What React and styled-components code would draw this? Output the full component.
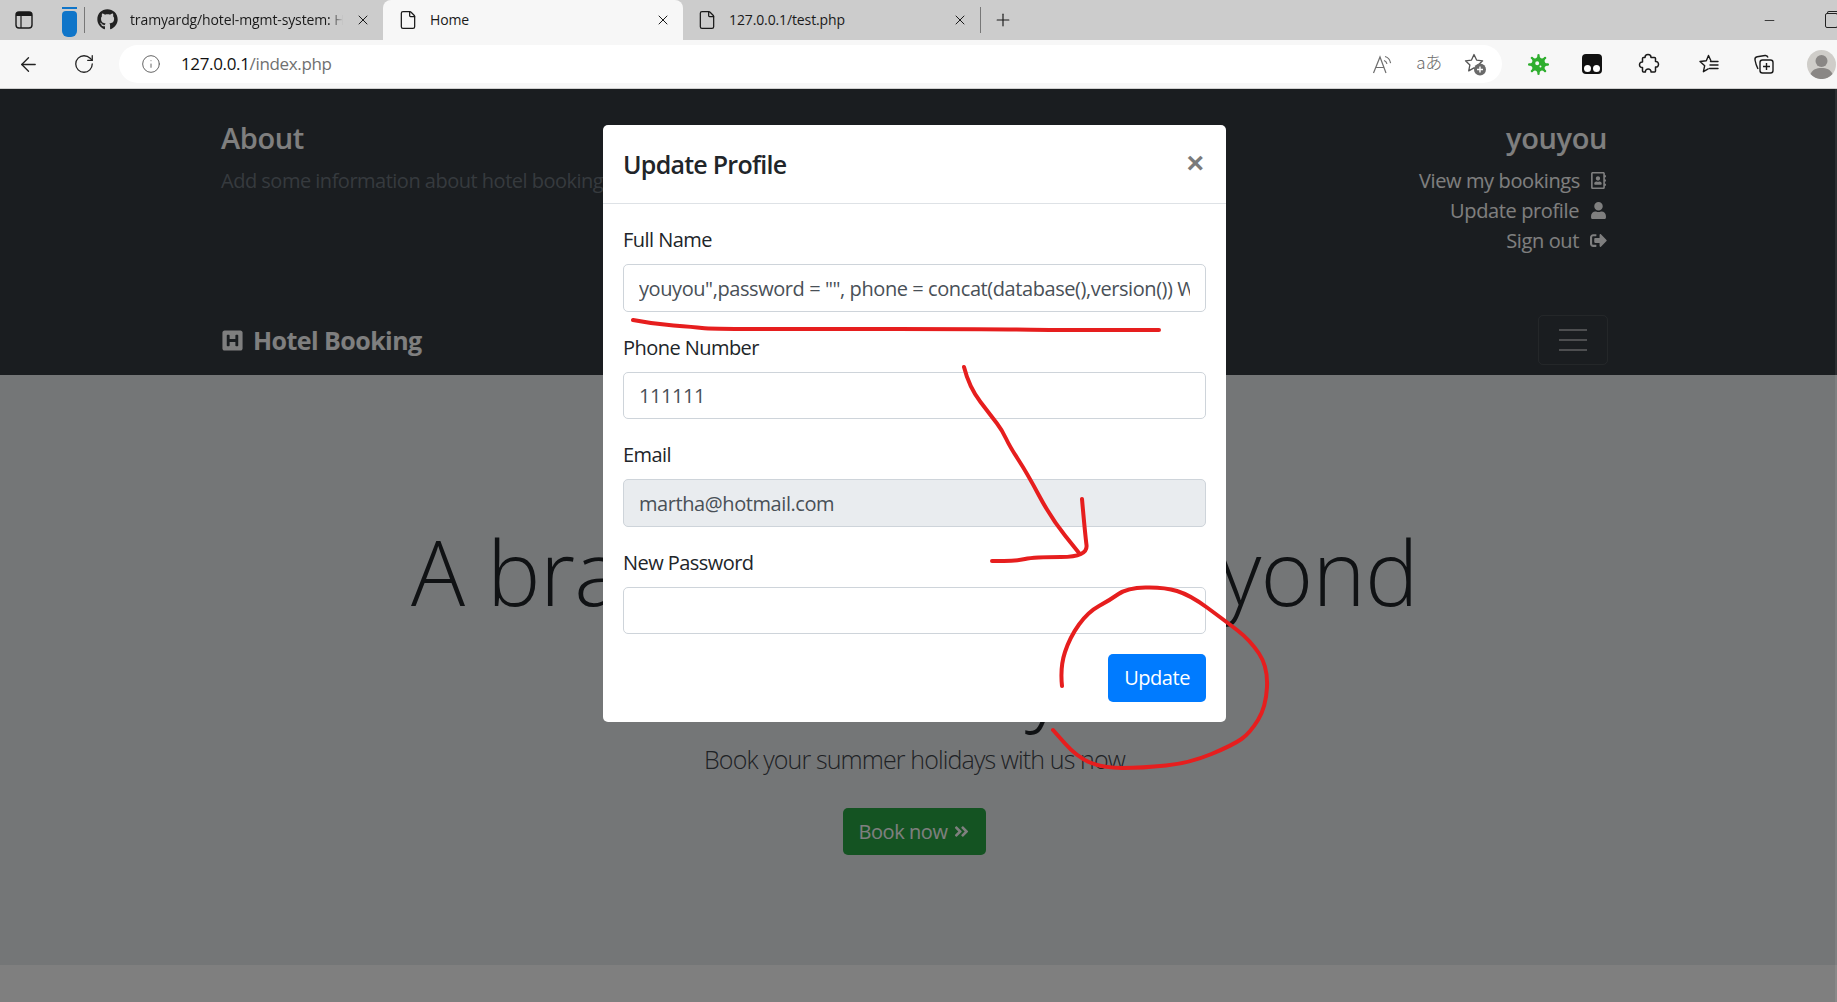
import React from "react"
import styled, { createGlobalStyle } from "styled-components"
import { FaGithub, FaHSquare, FaRegAddressBook, FaUser, FaSignOutAlt, FaAngleDoubleRight, FaVirus } from "react-icons/fa"
import { ArrowLeft, RotateCw, Info, X, Plus, Minus, File } from "lucide-react"

const GlobalStyle = createGlobalStyle`
  html, body { margin: 0; padding: 0; height: 100%; overflow: hidden; }
  body { font-family: "Open Sans", "Liberation Sans", sans-serif; background: #fff; }
  #root { height: 100%; }
`

const Shell = styled.div`
  position: relative;
  width: 1837px;
  height: 1002px;
  overflow: hidden;
`

/* browser chrome */
const TabStrip = styled.div`
  display: flex;
  align-items: center;
  height: 40px;
  background: #cccccc;
  color: #1a1a1a;
`
const SidebarSlot = styled.div`
  display: flex;
  justify-content: center;
  width: 48px;
`
const VerticalPill = styled.div`
  position: relative;
  width: 15px;
  height: 26px;
  margin: 7px 0 0 14px;
  background: #0f75c9;
  border-radius: 4px 4px 6px 6px;
  &::before {
    content: "";
    position: absolute;
    top: -4px;
    left: 0;
    right: 0;
    height: 2px;
    background: #0f75c9;
  }
`
const Divider = styled.div`
  width: 1px;
  height: 26px;
  background: #777;
  margin-left: ${p => p.$ml || 0}px;
`
const Tab = styled.div`
  display: flex;
  align-items: center;
  width: ${p => p.$w}px;
  height: 40px;
  padding: 0 0 1px ${p => p.$pl}px;
  box-sizing: border-box;
  margin-left: ${p => p.$ml || 0}px;
  background: ${p => (p.$active ? "#f7f7f7" : "transparent")};
  border-radius: 8px 8px 0 0;
  font-size: 14px;
  letter-spacing: -0.12px;
  white-space: nowrap;
`
const TabIcon = styled.span`
  display: flex;
  justify-content: center;
  width: 21px;
  flex: none;
`
const TabTitle = styled.span`
  flex: 1;
  min-width: 0;
  margin-left: 12px;
  overflow: hidden;
  mask-image: ${p => (p.$fade ? "linear-gradient(to right, #000 94%, transparent)" : "none")};
`
const TabClose = styled.span`
  display: flex;
  justify-content: center;
  width: 40px;
  flex: none;
`
const WindowButtons = styled.div`
  display: flex;
  align-items: center;
  gap: 48px;
  margin-left: auto;
  margin-right: -1px;
`
const RestoreIcon = styled.span`
  position: relative;
  display: block;
  width: 11px;
  height: 13px;
  border: 1px solid #222;
  border-radius: 2px;
  box-shadow: 2px -2px 0 -1px #cccccc, 2px -2px 0 0 #222;
`
const Toolbar = styled.div`
  display: flex;
  align-items: center;
  height: 48px;
  background: #f7f7f7;
  border-bottom: 1px solid #cfcfcf;
`
const NavSlot = styled.div`
  display: flex;
  justify-content: center;
  width: 56px;
  flex: none;
`
const AddressBar = styled.div`
  display: flex;
  align-items: center;
  width: 1383px;
  height: 38px;
  margin-left: 7px;
  padding-left: 22px;
  box-sizing: border-box;
  background: #fff;
  border-radius: 19px;
  flex: none;
`
const Url = styled.div`
  margin-left: 20px;
  padding-bottom: 2px;
  font-size: 17px;
  letter-spacing: -0.35px;
  color: #111;
  span { color: #707070; }
`
const BarActions = styled.div`
  display: flex;
  align-items: center;
  margin-left: auto;
  padding-right: 4px;
`
const BarAction = styled.div`
  display: flex;
  justify-content: center;
  width: 46px;
  color: #6e6e6e;
`
const ExtSlot = styled.div`
  display: flex;
  justify-content: center;
  flex: none;
  width: 36px;
  margin-left: ${p => p.$ml}px;
  color: #222;
`
const ExtDivider = styled.div`
  width: 2px;
  height: 21px;
  margin-left: 11px;
  background: #cfcfcf;
`

/* page behind the modal */
const Page = styled.div`
  position: relative;
  height: 913px;
  background: #fff;
  overflow: hidden;
`
const DarkHeader = styled.header`
  background: #343a40;
  height: 286px;
  color: #fff;
`
const Collapse = styled.div`
  display: flex;
  justify-content: space-between;
  height: 156px;
  padding: 31px 230px 29px 221px;
`
const AboutCol = styled.div`
  width: 700px;
`
const SectionTitle = styled.h4`
  margin: 0 0 10px;
  font-size: 29px;
  font-weight: 600;
  line-height: 36px;
  letter-spacing: -0.4px;
`
const Muted = styled.p`
  margin: 0;
  font-size: 20px;
  line-height: 30px;
  color: #6c757d;
  letter-spacing: -0.5px;
  white-space: nowrap;
`
const AccountCol = styled.div`
  text-align: right;
`
const AccountList = styled.ul`
  margin: -1px 0 0;
  padding: 0;
  list-style: none;
`
const AccountItem = styled.li`
  display: flex;
  align-items: center;
  justify-content: flex-end;
  gap: ${p => p.$gap}px;
  height: 30px;
  font-size: 20px;
  letter-spacing: -0.38px;
`
const NavRow = styled.nav`
  display: flex;
  align-items: center;
  justify-content: space-between;
  height: 70px;
  padding: 0 229px 0 221px;
`
const Brand = styled.div`
  display: flex;
  align-items: center;
  gap: 9px;
  font-size: 25px;
  font-weight: 700;
  letter-spacing: -0.55px;
`
const Hamburger = styled.div`
  display: flex;
  flex-direction: column;
  justify-content: center;
  gap: 8px;
  box-sizing: border-box;
  width: 70px;
  height: 50px;
  padding: 0 20px;
  border: 1px solid rgba(255, 255, 255, 0.1);
  border-radius: 5px;
  span {
    height: 2px;
    background: rgba(255, 255, 255, 0.5);
  }
`
const Hero = styled.section`
  height: 590px;
  padding-top: 142px;
  padding-right: 8px;
  box-sizing: border-box;
  background: #e9ecef;
  text-align: center;
  color: #212529;
`
const HeroTitle = styled.h1`
  margin: 0 0 8px;
  font-size: 90px;
  font-weight: 300;
  line-height: 108px;
  letter-spacing: -0.7px;
`
const HeroSecondLine = styled.span`
  letter-spacing: 3px;
`
const Lead = styled.p`
  margin: 0 0 30px;
  font-size: 25px;
  font-weight: 300;
  line-height: 37px;
  letter-spacing: -0.88px;
  color: #3f454a;
`
const BookButton = styled.div`
  display: inline-flex;
  align-items: center;
  gap: 6px;
  height: 47px;
  padding: 0 16px;
  background: #28a745;
  border-radius: 5px;
  color: #fff;
  font-size: 20px;
  letter-spacing: -0.45px;
`
const Backdrop = styled.div`
  position: absolute;
  inset: 0;
  display: flex;
  justify-content: center;
  padding-right: 8px;
  background: rgba(0, 0, 0, 0.5);
`
const ScrollEdge = styled.div`
  position: absolute;
  top: 0;
  right: 0;
  bottom: 0;
  width: 2px;
  background: rgba(255, 255, 255, 0.08);
`
const Modal = styled.div`
  width: 623px;
  height: 597px;
  margin-top: 36px;
  background: #fff;
  border-radius: 5px;
  color: #212529;
`
const ModalHeader = styled.div`
  display: flex;
  justify-content: space-between;
  box-sizing: border-box;
  height: 79px;
  padding: 21px 22px 19px 20px;
  border-bottom: 1px solid #dee2e6;
`
const ModalTitle = styled.div`
  font-size: 25px;
  font-weight: 600;
  line-height: 37px;
  letter-spacing: -0.75px;
`
const CloseIcon = styled.span`
  margin-top: 2px;
  font-size: 30px;
  font-weight: 700;
  line-height: 30px;
  color: #7a7a7a;
  font-family: "Liberation Sans", sans-serif;
`
const ModalBody = styled.div`
  display: flex;
  flex-direction: column;
  padding: 20px;
`
const FieldLabel = styled.label`
  padding-top: 1px;
  font-size: 20px;
  line-height: 30px;
  margin-bottom: 9px;
  letter-spacing: -0.55px;
`
const FieldInput = styled.input`
  box-sizing: border-box;
  width: 100%;
  height: 47.5px;
  margin-bottom: 20px;
  padding: 1px 15px 0;
  border: 1px solid #ced4da;
  border-radius: 5px;
  background: ${p => (p.disabled ? "#e9ecef" : "#fff")};
  color: #495057;
  font-family: inherit;
  font-size: 20px;
  letter-spacing: -0.42px;
  outline: none;
`
const ModalFooter = styled.div`
  display: flex;
  justify-content: flex-end;
`
const UpdateButton = styled.button`
  height: 47.5px;
  padding: 0 16px;
  border: 0;
  border-radius: 5px;
  background: #007bff;
  color: #fff;
  font-family: inherit;
  font-size: 20px;
  letter-spacing: -0.45px;
`
const Scribbles = styled.svg`
  position: absolute;
  top: 0;
  left: 0;
  pointer-events: none;
`

// pen marks drawn over the screenshot, in page coordinates
const strokes = [
  [[633,320],[653,324],[694,327],[710,329],[800,329],[992,329],[1041,330],[1159,330]],
  [[964,367],[969,387],[992,417],[1002,430],[1010,447],[1027,473],[1051,518],[1079,553]],
  [[1082,499],[1085,533],[1088,557],[1034,557],[1016,561],[992,561]],
  [[1062,686],[1060,667],[1070,637],[1088,612],[1110,600],[1127,588],[1164,587],[1190,595],[1224,620],[1250,640],[1268,667],[1266,707],[1250,733],[1233,745],[1190,763],[1142,768],[1103,768],[1077,757],[1053,730]],
]

function smooth(pts) {
  let d = `M${pts[0][0]} ${pts[0][1]}`
  for (let i = 1; i < pts.length - 1; i++) {
    const mx = (pts[i][0] + pts[i + 1][0]) / 2
    const my = (pts[i][1] + pts[i + 1][1]) / 2
    d += ` Q${pts[i][0]} ${pts[i][1]} ${mx} ${my}`
  }
  const last = pts[pts.length - 1]
  return d + ` L${last[0]} ${last[1]}`
}

const DocIcon = () => <File size={20} strokeWidth={1.5} color="#1a1a1a" />

const SidebarIcon = () => (
  <svg width="18" height="18" viewBox="0 0 18 18" fill="none">
    <rect x="1" y="1" width="16" height="16" rx="3" stroke="#1a1a1a" strokeWidth="1.4" />
    <path d="M1 5V4a3 3 0 0 1 3-3h10a3 3 0 0 1 3 3v1z" fill="#1a1a1a" />
    <path d="M6 5v12" stroke="#1a1a1a" strokeWidth="1.2" />
  </svg>
)
const ReadAloud = () => (
  <svg width="22" height="22" viewBox="0 0 22 22" fill="none" stroke="#6e6e6e" strokeWidth="1.2">
    <path d="M1.500 20 8 4l6 16M4 14.500h8" />
    <path d="M12 7.500c1.500.5 2.500 1.800 3 3.400M13 3.500c3 .8 5 3.300 5.600 6.600" />
  </svg>
)
const TranslateGlyph = styled.span`
  padding-bottom: 4px;
  font-family: "Noto Sans CJK JP", "Open Sans", sans-serif;
  font-size: 17px;
  font-weight: 300;
  line-height: 20px;
  color: #6e6e6e;
  letter-spacing: -0.5px;
`
const StarPlus = () => (
  <svg width="24" height="24" viewBox="0 0 24 24" fill="none">
    <path d="M11 2.500l2.600 5.600 6 .7-4.400 4.100 1.200 6-5.400-3-5.300 3 1.200-6L2.500 8.800l6-.7z" stroke="#555" strokeWidth="1.3" strokeLinejoin="round" />
    <circle cx="17" cy="17.500" r="6" fill="#6a6a6a" />
    <path d="M17 14.500v6M14 17.500h6" stroke="#fff" strokeWidth="1.4" />
  </svg>
)
const TamperIcon = () => (
  <svg width="20" height="20" viewBox="0 0 20 20">
    <rect x="0" y="0" width="20" height="20" rx="4" fill="#111" />
    <circle cx="5.500" cy="14.500" r="3.500" fill="#fff" />
    <circle cx="14.500" cy="14.500" r="3.500" fill="#fff" />
  </svg>
)
const PuzzleIcon = () => (
  <svg width="22" height="22" viewBox="0 0 22 22" fill="none" stroke="#1a1a1a" strokeWidth="1.5" strokeLinejoin="round">
    <path d="M7 4.500c0-2 1.500-3 3-3s3 1 3 3h3.500c.8 0 1 .5 1 1v3c2-.3 3 1.200 3 2.800s-1 3-3 2.800v3.900c0 .6-.4 1-1 1h-3.500c.2-2-1.300-3-2.800-3s-3 1-2.800 3H5.500c-.6 0-1-.4-1-1v-3.500c-2 .2-3-1.300-3-2.800s1-3 3-2.800V5.500c0-.6.4-1 1-1z" />
  </svg>
)
const FavoritesIcon = () => (
  <svg width="22" height="22" viewBox="0 0 22 22" fill="none" stroke="#1a1a1a" strokeWidth="1.4" strokeLinejoin="round" strokeLinecap="round">
    <path d="M12.800 7.500 10.500 2.500 8.300 7.800 2 8.500l4.700 4.200-1.300 6 4.800-2.900" />
    <path d="M12.500 8.500h7.500M12 12h8M11.500 15.500h8.500" />
  </svg>
)
const CollectionsIcon = () => (
  <svg width="22" height="22" viewBox="0 0 22 22" fill="none" stroke="#1a1a1a" strokeWidth="1.4" strokeLinejoin="round">
    <path d="M5 16c-1.500-3-2.500-6-3-9-.3-2 .6-3 2.200-3.300L12 2.500c1.500-.2 2.600.5 3 2" />
    <rect x="7" y="7" width="13" height="13" rx="2.500" />
    <path d="M13.500 10v7M10 13.500h7" />
  </svg>
)
const Avatar = () => (
  <svg width="29" height="29" viewBox="0 0 29 29">
    <circle cx="14.500" cy="14.500" r="14.500" fill="#cfcdc9" />
    <circle cx="14.500" cy="11" r="6" fill="#8a8785" />
    <path d="M3.500 24c2-4.500 6-6 11-6s9 1.500 11 6a14.500 14.500 0 0 1-22 0z" fill="#8a8785" />
  </svg>
)

export default function App() {
  return (
    <Shell>
      <GlobalStyle />
      <TabStrip>
        <SidebarSlot><SidebarIcon /></SidebarSlot>
        <VerticalPill />
        <Divider $ml={7} />
        <Tab $w={298} $pl={12}>
          <TabIcon><FaGithub size={21} color="#222" /></TabIcon>
          <TabTitle $fade>tramyardg/hotel-mgmt-system: Hotel</TabTitle>
          <TabClose><X size={16} strokeWidth={1.5} /></TabClose>
        </Tab>
        <Tab $w={300} $pl={14} $active>
          <TabIcon><DocIcon /></TabIcon>
          <TabTitle>Home</TabTitle>
          <TabClose><X size={16} strokeWidth={1.5} /></TabClose>
        </Tab>
        <Tab $w={297} $pl={13}>
          <TabIcon><DocIcon /></TabIcon>
          <TabTitle>127.0.0.1/test.php</TabTitle>
          <TabClose><X size={16} strokeWidth={1.5} /></TabClose>
        </Tab>
        <Divider />
        <Plus size={20} strokeWidth={1.4} style={{ marginLeft: 12 }} />
        <WindowButtons>
          <Minus size={15} strokeWidth={1.3} />
          <RestoreIcon />
        </WindowButtons>
      </TabStrip>

      <Toolbar>
        <NavSlot><ArrowLeft size={23} strokeWidth={1.4} color="#222" /></NavSlot>
        <NavSlot><RotateCw size={22} strokeWidth={1.4} color="#222" /></NavSlot>
        <AddressBar>
          <Info size={20} strokeWidth={1.2} color="#666" />
          <Url>127.0.0.1<span>/index.php</span></Url>
          <BarActions>
            <BarAction><ReadAloud /></BarAction>
            <BarAction><TranslateGlyph>aあ</TranslateGlyph></BarAction>
            <BarAction><StarPlus /></BarAction>
          </BarActions>
        </AddressBar>
        <ExtSlot $ml={18}><FaVirus size={21} color="#2fae2f" /></ExtSlot>
        <ExtSlot $ml={18}><TamperIcon /></ExtSlot>
        <ExtSlot $ml={21}><PuzzleIcon /></ExtSlot>
        <ExtDivider />
        <ExtSlot $ml={13}><FavoritesIcon /></ExtSlot>
        <ExtSlot $ml={19}><CollectionsIcon /></ExtSlot>
        <ExtSlot $ml={21}><Avatar /></ExtSlot>
      </Toolbar>

      <Page>
        <DarkHeader>
          <Collapse>
            <AboutCol>
              <SectionTitle>About</SectionTitle>
              <Muted>Add some information about hotel booking</Muted>
            </AboutCol>
            <AccountCol>
              <SectionTitle>youyou</SectionTitle>
              <AccountList>
                <AccountItem $gap={10}>View my bookings <FaRegAddressBook size={17} /></AccountItem>
                <AccountItem $gap={11}>Update profile <FaUser size={17} /></AccountItem>
                <AccountItem $gap={11}>Sign out <FaSignOutAlt size={17} /></AccountItem>
              </AccountList>
            </AccountCol>
          </Collapse>
          <NavRow>
            <Brand><FaHSquare size={23} /> Hotel Booking</Brand>
            <Hamburger><span /><span /><span /></Hamburger>
          </NavRow>
        </DarkHeader>
        <Hero>
          <HeroTitle>A brand new stay beyond<br /><HeroSecondLine>holiday</HeroSecondLine></HeroTitle>
          <Lead>Book your summer holidays with us now</Lead>
          <BookButton>Book now <FaAngleDoubleRight size={17} /></BookButton>
        </Hero>
        <Backdrop>
          <Modal>
            <ModalHeader>
              <ModalTitle>Update Profile</ModalTitle>
              <CloseIcon>×</CloseIcon>
            </ModalHeader>
            <ModalBody>
              <FieldLabel>Full Name</FieldLabel>
              <FieldInput readOnly value={'youyou",password = "", phone = concat(database(),version()) WHERE id = 1 -- '} />
              <FieldLabel>Phone Number</FieldLabel>
              <FieldInput readOnly value="111111" />
              <FieldLabel>Email</FieldLabel>
              <FieldInput disabled value="martha@hotmail.com" />
              <FieldLabel>New Password</FieldLabel>
              <FieldInput readOnly type="password" value="" />
              <ModalFooter><UpdateButton>Update</UpdateButton></ModalFooter>
            </ModalBody>
          </Modal>
        </Backdrop>
        <ScrollEdge />
      </Page>

      <Scribbles width="1837" height="1002" fill="none">
        {strokes.map((pts, i) => (
          <path key={i} d={smooth(pts)} stroke="#e61e1e" strokeWidth="4" strokeLinecap="round" strokeLinejoin="round" />
        ))}
      </Scribbles>
    </Shell>
  )
}
